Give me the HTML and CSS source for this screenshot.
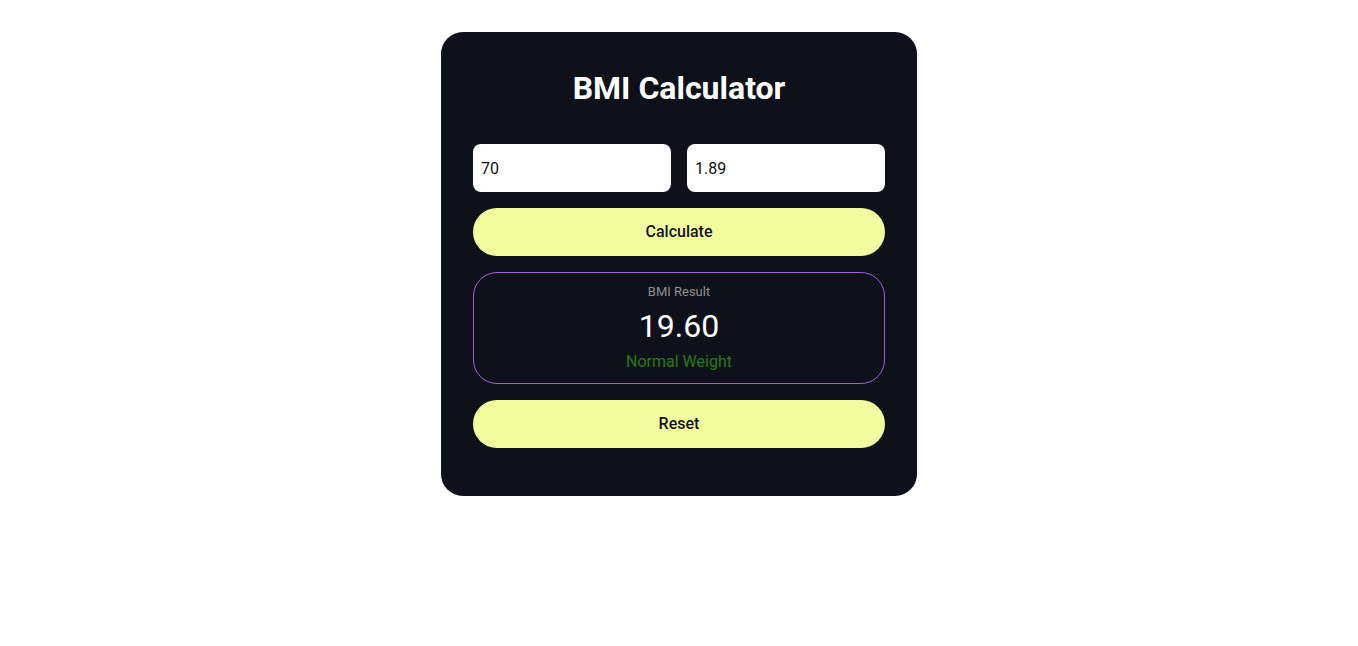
FILE: index.html
```html
<!DOCTYPE html>
<html lang="en">
<head>
<meta charset="utf-8">
<title>BMI Calculator</title>
<link rel="stylesheet" href="styles.css">
</head>
<body>
<main class="card">
  <h1 class="title">BMI Calculator</h1>
  <div class="inputs">
    <input class="field" type="text" value="70">
    <input class="field" type="text" value="1.89">
  </div>
  <button class="btn">Calculate</button>
  <section class="result">
    <div class="result-label">BMI Result</div>
    <div class="result-value">19.60</div>
    <div class="result-status">Normal Weight</div>
  </section>
  <button class="btn">Reset</button>
</main>
</body>
</html>
```

FILE: styles.css
```css
* { box-sizing: border-box; }
html, body { margin: 0; padding: 0; background: #ffffff; }
body {
  font-family: Roboto, "Liberation Sans", sans-serif;
  display: flex;
  justify-content: center;
  padding-top: 32px;
}
.card {
  width: 476px;
  background: #0e111a;
  border-radius: 22px;
  padding: 32px 32px 48px;
  display: flex;
  flex-direction: column;
  gap: 16px;
}
.title {
  margin: 0 0 16px;
  color: #ffffff;
  font-size: 32px;
  font-weight: 700;
  line-height: 48px;
  text-align: center;
}
.inputs {
  display: flex;
  gap: 16px;
}
.field {
  flex: 1;
  min-width: 0;
  height: 48px;
  border: none;
  border-radius: 8px;
  background: #ffffff;
  padding: 0 8px;
  font-family: Roboto, "Liberation Sans", sans-serif;
  font-size: 16px;
  color: #111111;
  outline: none;
}
.btn {
  height: 48px;
  border: none;
  border-radius: 24px;
  background: #f2fe9e;
  color: #111318;
  font-family: Roboto, "Liberation Sans", sans-serif;
  font-size: 16px;
  font-weight: 500;
  line-height: 20px;
  padding: 0 0 1px;
  cursor: pointer;
}
.result {
  height: 112px;
  border: 1px solid #a05fd8;
  border-radius: 24px;
  padding: 11px 16px 0;
  text-align: center;
  display: flex;
  flex-direction: column;
  align-items: center;
}
.result-label {
  color: #8d8d93;
  font-size: 13px;
  line-height: 16px;
}
.result-value {
  color: #ffffff;
  font-size: 32px;
  line-height: 38px;
  margin-top: 7px;
}
.result-status {
  color: #237c10;
  font-size: 16px;
  line-height: 20px;
  margin-top: 7px;
}
```
